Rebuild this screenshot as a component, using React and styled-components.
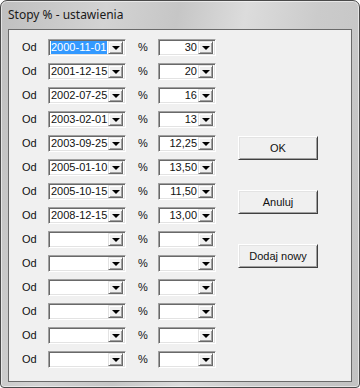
import React from "react";
import styled, { createGlobalStyle } from "styled-components";

const GlobalStyle = createGlobalStyle`
  html, body { margin: 0; padding: 0; background: #fff; }
  * { box-sizing: border-box; }
`;

const Window = styled.div`
  width: 360px;
  height: 388px;
  display: flex;
  flex-direction: column;
  padding: 0 7px 5px 7px;
  border: 1px solid #4a4a4a;
  border-radius: 7px 7px 4px 4px;
  background: linear-gradient(100deg, #bfbfbf 0%, #d3d3d3 25%, #c6c6c6 42%, #dcdcdc 58%, #cbcbcb 75%, #c2c2c2 100%);
  box-shadow: inset 0 0 0 1px rgba(255, 255, 255, 0.55);
  font-family: "Liberation Sans", Arial, sans-serif;
`;

const TitleBar = styled.div`
  height: 28px;
  display: flex;
  align-items: center;
  font-family: "Noto Sans", "Open Sans", sans-serif;
  font-size: 12px;
  color: #1a1a1a;
  padding-bottom: 1px;
`;

const Client = styled.div`
  flex: 1;
  display: flex;
  background: #f0f0f0;
  border: 1px solid #6a6a6a;
`;

const Rows = styled.div`
  display: flex;
  flex-direction: column;
  gap: 7px;
  padding: 9px 0 0 13px;
`;

const Row = styled.div`
  display: grid;
  grid-template-columns: 26px 78px 12px 20px 58px;
  height: 17px;
  align-items: center;
  font-size: 11px;
  color: #111;
`;

const Label = styled.span`
  line-height: 17px;
`;

const Combo = styled.div`
  grid-column: ${(p) => p.$col};
  height: 17px;
  display: flex;
  align-items: center;
  background: #fff;
  border: 1px solid;
  border-color: #a0a0a0 #ffffff #ffffff #a0a0a0;
  box-shadow: inset 1px 1px 0 #696969, inset -1px -1px 0 #e3e3e3;
  padding: 2px;
`;

const Value = styled.div`
  flex: 1;
  height: 13px;
  line-height: 13px;
  display: flex;
  justify-content: ${(p) => (p.$right ? "flex-end" : "flex-start")};
  padding-right: ${(p) => (p.$right ? "1px" : "0")};
  white-space: nowrap;
  overflow: hidden;
`;

const Selected = styled.span`
  background: #3399ff;
  color: #fff;
  padding: 0 1px 0 0;
`;

const DropButton = styled.div`
  width: 15px;
  height: 13px;
  flex: none;
  display: flex;
  align-items: center;
  justify-content: center;
  background: #f0f0f0;
  border: 1px solid;
  border-color: #e3e3e3 #696969 #696969 #e3e3e3;
  box-shadow: inset 1px 1px 0 #fff, inset -1px -1px 0 #a0a0a0;
`;

const Arrow = styled.div`
  width: 0;
  height: 0;
  border-left: 4px solid transparent;
  border-right: 4px solid transparent;
  border-top: 4px solid #000;
  margin-top: 1px;
`;

const Buttons = styled.div`
  display: flex;
  flex-direction: column;
  gap: 30px;
  margin-left: 22px;
  padding-top: 106px;
`;

const Button = styled.button`
  width: 80px;
  height: 24px;
  padding: 0;
  font-family: "Liberation Sans", Arial, sans-serif;
  font-size: 11px;
  color: #111;
  background: #f0f0f0;
  border: 1px solid;
  border-color: #ffffff #404040 #404040 #ffffff;
  box-shadow: inset 1px 1px 0 #e3e3e3, inset -1px -1px 0 #a0a0a0;
`;

const rows = [
  ["2000-11-01", "30"],
  ["2001-12-15", "20"],
  ["2002-07-25", "16"],
  ["2003-02-01", "13"],
  ["2003-09-25", "12,25"],
  ["2005-01-10", "13,50"],
  ["2005-10-15", "11,50"],
  ["2008-12-15", "13,00"],
  ["", ""],
  ["", ""],
  ["", ""],
  ["", ""],
  ["", ""],
  ["", ""],
];

function DropDown({ col, children, right }) {
  return (
    <Combo $col={col}>
      <Value $right={right}>{children}</Value>
      <DropButton>
        <Arrow />
      </DropButton>
    </Combo>
  );
}

export default function App() {
  return (
    <>
      <GlobalStyle />
      <Window>
        <TitleBar>Stopy % - ustawienia</TitleBar>
        <Client>
          <Rows>
            {rows.map(([date, rate], i) => (
              <Row key={i}>
                <Label>Od</Label>
                <DropDown col={2}>
                  {i === 0 ? <Selected>{date}</Selected> : date}
                </DropDown>
                <span />
                <Label>%</Label>
                <DropDown col={5} right>
                  {rate}
                </DropDown>
              </Row>
            ))}
          </Rows>
          <Buttons>
            <Button>OK</Button>
            <Button>Anuluj</Button>
            <Button>Dodaj nowy</Button>
          </Buttons>
        </Client>
      </Window>
    </>
  );
}
